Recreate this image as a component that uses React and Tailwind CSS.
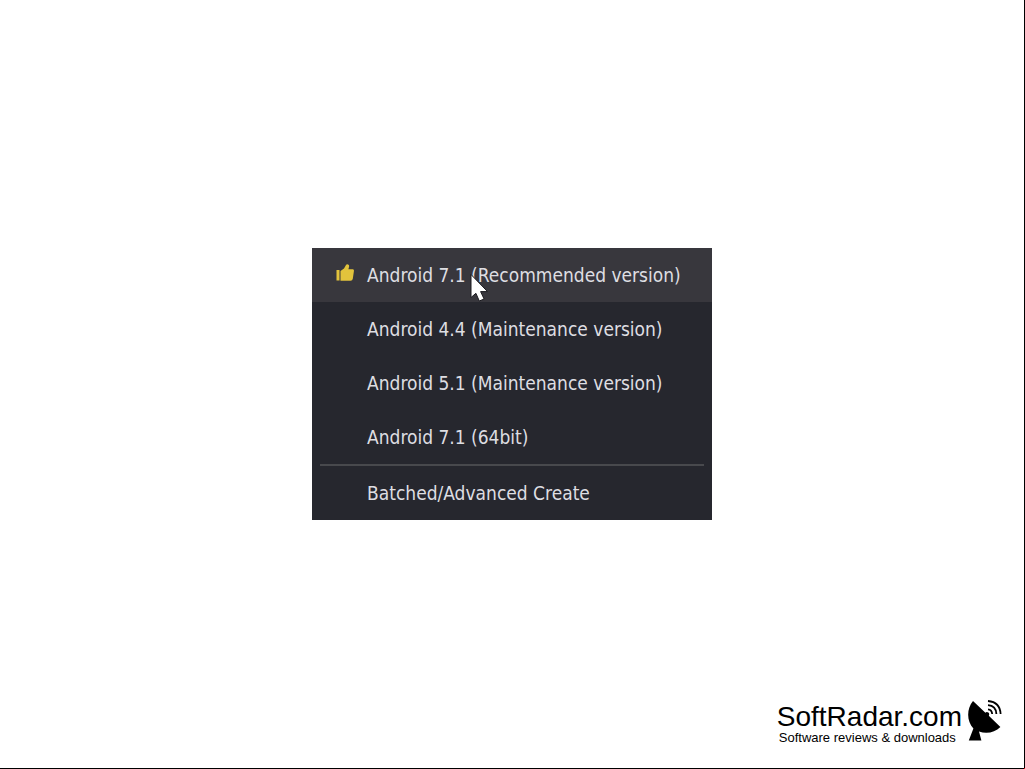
import React from 'react';

const versions = [
  { id: 'a71', label: 'Android 7.1 (Recommended version)', recommended: true },
  { id: 'a44', label: 'Android 4.4 (Maintenance version)' },
  { id: 'a51', label: 'Android 5.1 (Maintenance version)' },
  { id: 'a71-64', label: 'Android 7.1 (64bit)' },
];

const ThumbIcon = () => (
  <svg viewBox="0 0 18 18" className="h-[18px] w-[18px] fill-[#e2c33c]" aria-hidden="true">
    <path d="M0.5 6h3v10.5h-3zM4.5 7L8 4.5 10 1Q10.6 0 12 .4Q13.6 1 13 3L12.4 5.2h4.6Q18.2 5.6 17.9 7.2L16.8 14.8Q16.4 16.8 14.6 16.8H4.5z" />
  </svg>
);

const Pointer = () => (
  <svg
    viewBox="0 0 18 29"
    className="pointer-events-none absolute left-[158px] top-[25px] h-[29px] w-[18px]"
    aria-hidden="true"
  >
    <path
      d="M1 1.5v23l4.9-4.2 3.4 7.7 4.8-2-3.5-7.4h6.9z"
      fill="#fff"
      stroke="#1b1b20"
      strokeWidth="1"
    />
  </svg>
);

const DishIcon = () => (
  <svg viewBox="0 0 34 42" className="h-[42px] w-[34px]" aria-hidden="true">
    <path
      d="M5 1L17.4 12.8Q18.6 11.4 20.4 12.6Q21.8 14 20.8 15.8L32.4 27C27 32.4 19 34.2 11 31.6L13.4 40.5H.8L5.4 28.6C-1.5 21-1.5 9 5 1z"
      fill="#000"
    />
    <path
      d="M20 9.4Q23.8 9.8 24.2 14M20 5.2Q28 5.8 28.4 14M20 1Q32 2 32.6 14"
      fill="none"
      stroke="#000"
      strokeWidth="1.8"
    />
  </svg>
);

const MenuItem = ({ label, recommended }) => (
  <button
    type="button"
    role="menuitem"
    className={`flex h-[54px] w-full items-center pl-6 text-left ${recommended ? 'bg-[#38373d]' : ''}`}
  >
    <span className="mb-1 w-[31px] shrink-0">{recommended && <ThumbIcon />}</span>
    <span className="whitespace-nowrap">{label}</span>
  </button>
);

const VersionMenu = () => (
  <div
    role="menu"
    aria-label="Create"
    className="relative w-[400px] max-w-full bg-[#26272e] font-['DejaVu_Sans_Condensed','DejaVu_Sans',sans-serif] text-[19px] leading-6 text-[#dedee2]"
  >
    {versions.map((item) => (
      <MenuItem key={item.id} label={item.label} recommended={item.recommended} />
    ))}
    <hr className="mx-2 border-t-2 border-[#48494d]" />
    <MenuItem label="Batched/Advanced Create" />
    <Pointer />
  </div>
);

const Brand = () => (
  <a href="#" className="flex items-start gap-1.5 text-black">
    <span className="flex flex-col pt-1 font-['Liberation_Sans',Arial,sans-serif]">
      <span className="text-[28px] leading-[26px]">SoftRadar.com</span>
      <span className="pl-0.5 text-[13px] leading-4">Software reviews &amp; downloads</span>
    </span>
    <DishIcon />
  </a>
);

export default function App() {
  return (
    <div className="relative grid min-h-screen grid-rows-[1fr_auto_1fr] border-b border-r border-black bg-white">
      <main className="row-start-2 flex justify-center">
        <VersionMenu />
      </main>
      <footer className="row-start-3 flex items-end justify-end pb-[22px] pr-[22px]">
        <Brand />
      </footer>
      <span className="absolute -bottom-px -right-px h-px w-px bg-red-600" />
    </div>
  );
}
